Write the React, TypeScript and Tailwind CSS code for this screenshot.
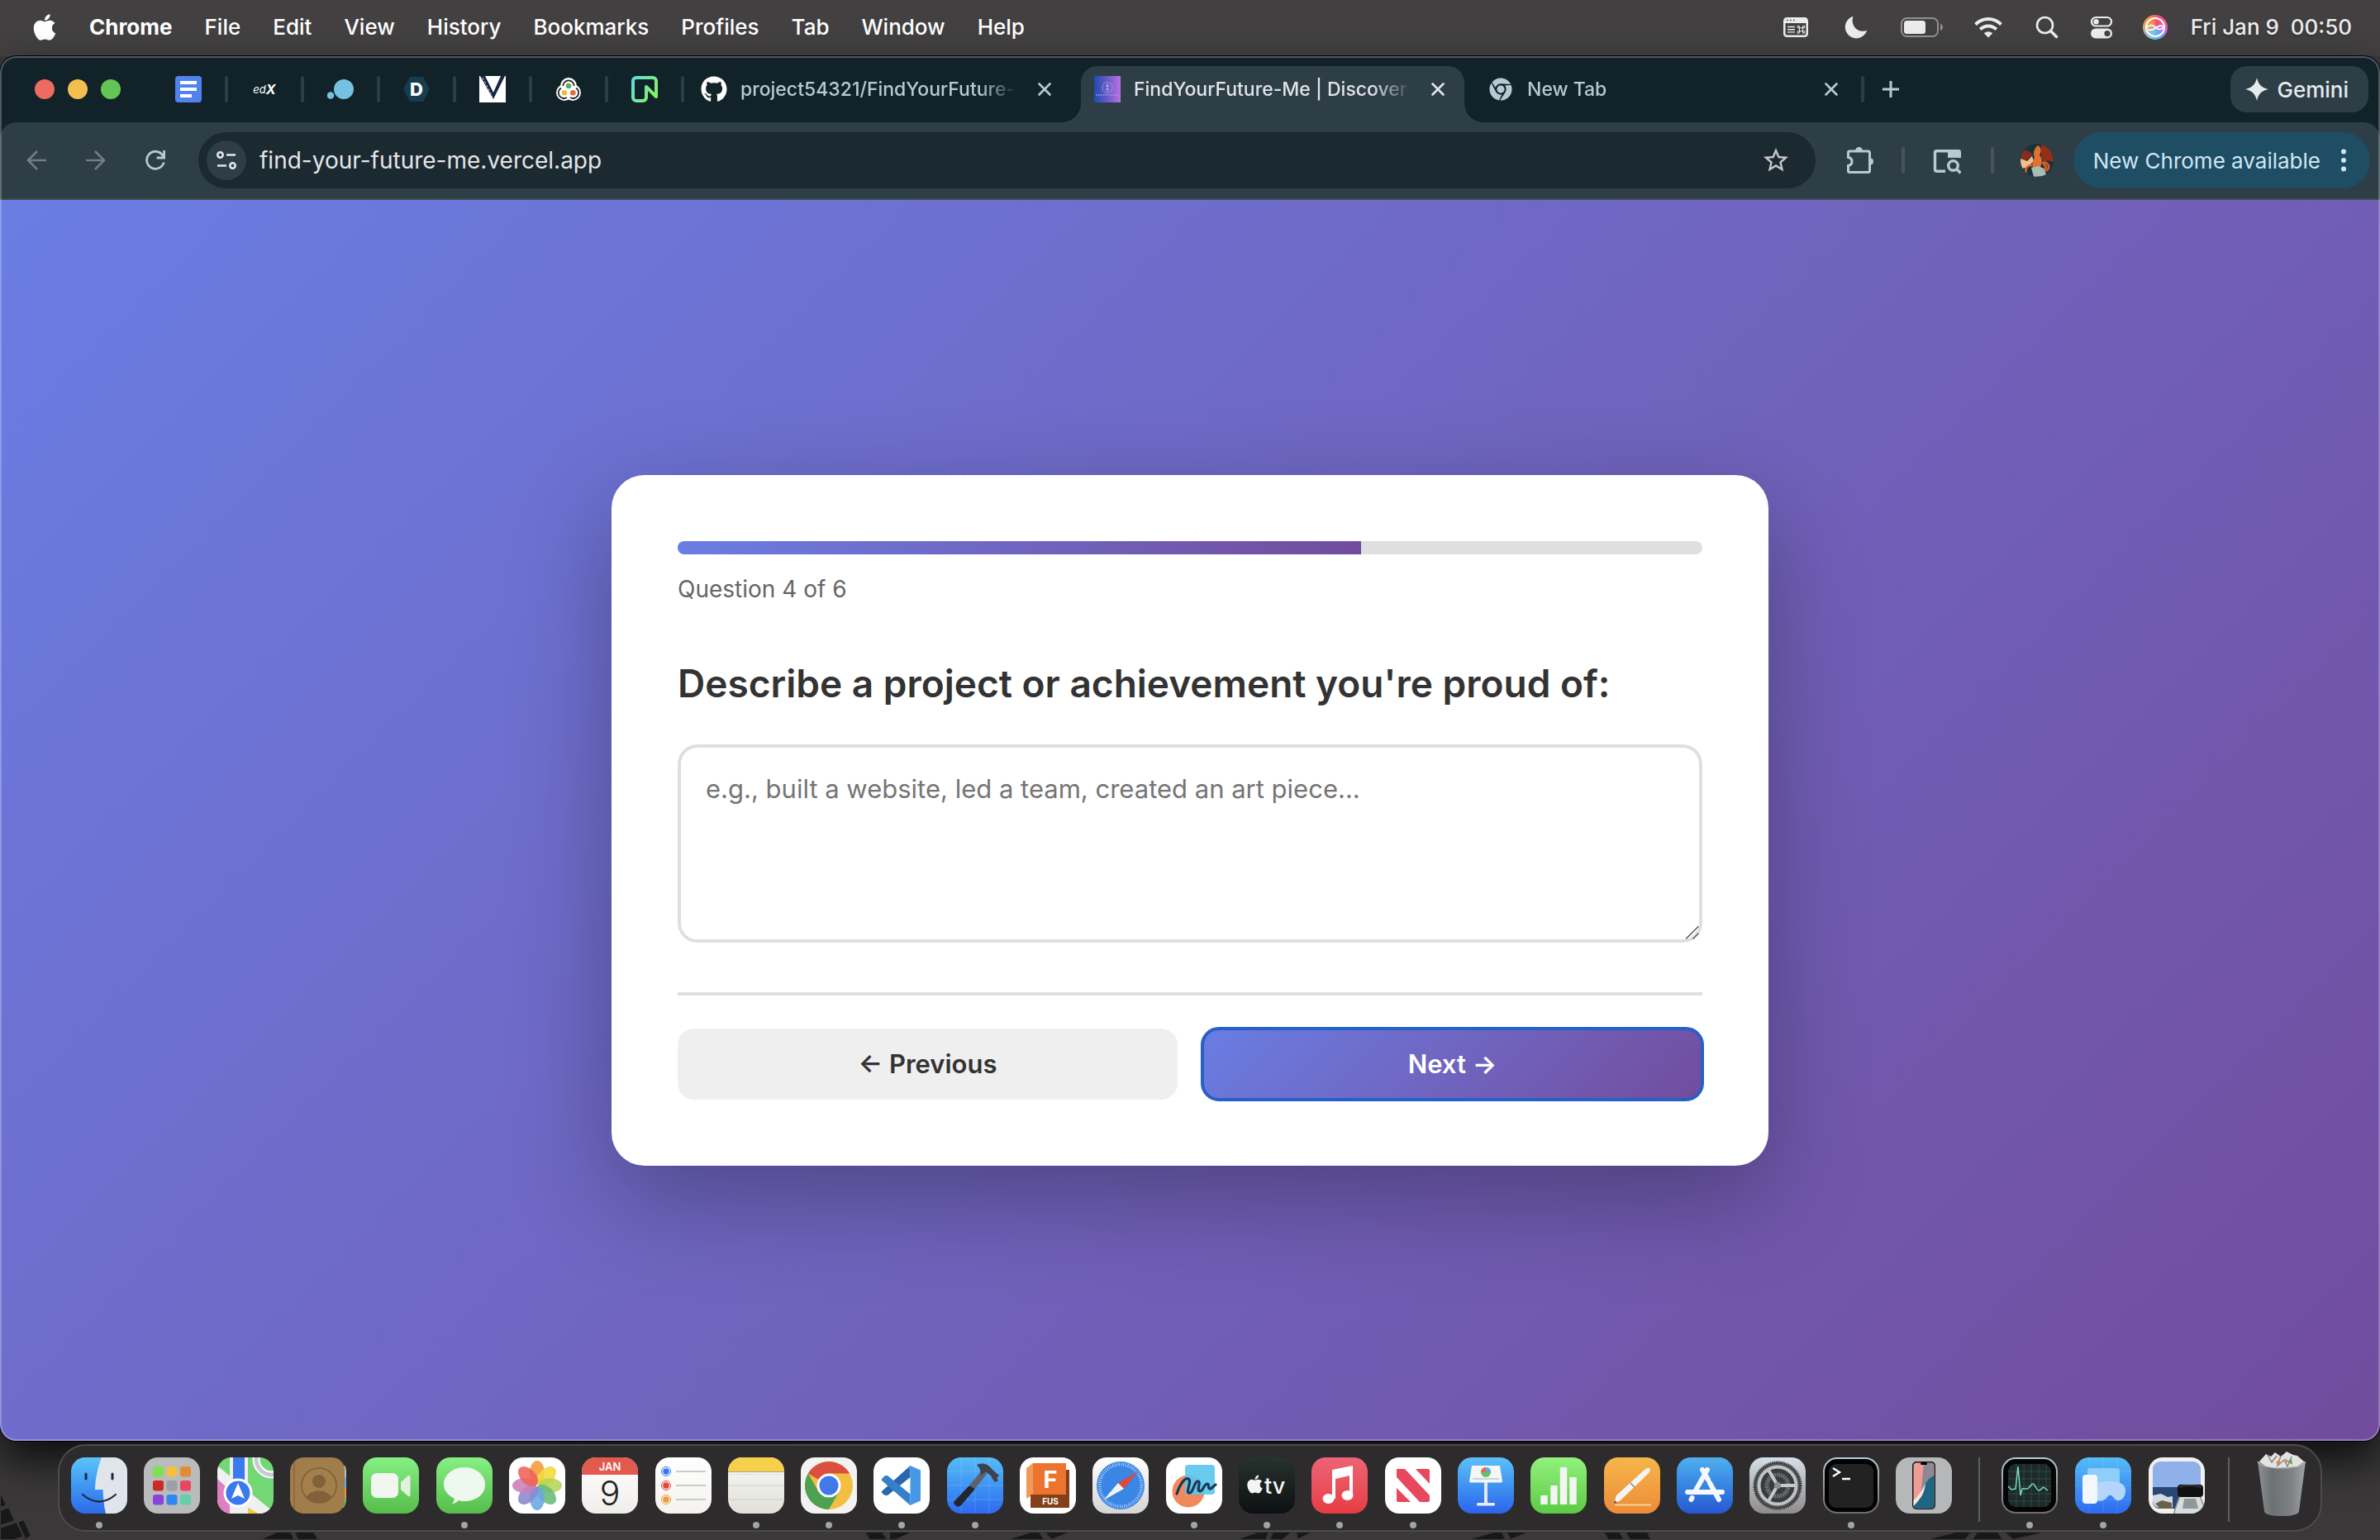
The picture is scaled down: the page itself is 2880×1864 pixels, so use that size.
import { useState } from "react";
import type { ReactNode } from "react";
import { FaApple, FaChrome, FaGithub } from "react-icons/fa";
import { MdStarBorder } from "react-icons/md";

const MENUS = ["File", "Edit", "View", "History", "Bookmarks", "Profiles", "Tab", "Window", "Help"];

function MenuBar() {
    return (
        <header className="flex h-17 shrink-0 items-center bg-[#424041] pb-0.5 pl-[40px] pr-[34px] text-[26px] leading-8 font-medium text-white text-shadow-md">
            <FaApple className="h-9 w-7 shrink-0" />
            <nav className="ml-10 flex items-center gap-[39px]">
                <button className="font-bold">Chrome</button>
                {MENUS.map((menu) => (
                    <button key={menu}>{menu}</button>
                ))}
            </nav>
            <div className="ml-auto flex items-center text-[#ececec]">
                <svg className="h-6 w-[30px]" viewBox="0 0 30 24" fill="none">
                    <rect x="1.25" y="1.25" width="27.5" height="21.5" rx="3" stroke="currentColor" strokeWidth="2.5" />
                    <path d="M1 2h28v5H1z" fill="currentColor" />
                    <path d="M4 3.5h1.6M8 3.5h1.6M12 3.5h1.6" stroke="#424041" strokeWidth="1.6" />
                    <path d="M5 11.5h9M5 14.7h9M5 17.9h9" stroke="currentColor" strokeWidth="1.4" />
                    <path d="M19.5 12.7h4v4h-4zM19.5 12.7h-1.2a1.2 1.2 0 1 1 1.2-1.2zM23.5 12.7v-1.2a1.2 1.2 0 1 1 1.2 1.2zM23.5 16.7h1.2a1.2 1.2 0 1 1-1.2 1.2zM19.5 16.7v1.2a1.2 1.2 0 1 1-1.2-1.2z" stroke="currentColor" strokeWidth="1.1" />
                </svg>
                <svg className="ml-11 h-7 w-7" viewBox="0 0 28 28" fill="currentColor">
                    <path d="M10.5.8A14 14 0 0 0 9.600 5.500C9.600 13 15 18.800 22 18.800c1.900 0 3.700-.3 5.200-1C25.200 23.500 20.200 27.400 14.200 27.400 6.800 27.400.8 21.300.8 13.800.8 7.800 4.800 2.500 10.500.8z" />
                </svg>
                <svg className="ml-10 h-6 w-[52px]" viewBox="0 0 52 24" fill="none">
                    <rect x="1" y="1" width="44" height="22" rx="6.500" stroke="#929192" strokeWidth="2" />
                    <rect x="4" y="4" width="26" height="16" rx="3.500" fill="currentColor" />
                    <path d="M48 8c4 1 4 7 0 8z" fill="#929192" />
                </svg>
                <svg className="ml-9 h-[26px] w-9" viewBox="0 0 36 26" fill="none" stroke="currentColor" strokeWidth="4">
                    <path d="M2.500 9.500C11.500.8 24.500.8 33.500 9.500" />
                    <path d="M8.200 15.500C13.500 10 22.500 10 27.800 15.500" />
                    <path d="M18 25.500l-5.200-5.300c2.700-2.700 7.700-2.700 10.400 0z" fill="currentColor" stroke="none" />
                </svg>
                <svg className="ml-[39px] h-7 w-7" viewBox="0 0 28 28" fill="none" stroke="currentColor">
                    <circle cx="11.500" cy="11.500" r="9.500" strokeWidth="2.600" />
                    <path d="M18.500 18.500l7 7" strokeWidth="3.400" strokeLinecap="round" />
                </svg>
                <svg className="ml-[38px] h-7 w-7" viewBox="0 0 28 28" fill="none">
                    <rect x="2" y="2" width="24" height="10.500" rx="5.250" stroke="currentColor" strokeWidth="2.200" />
                    <circle cx="7.500" cy="7.200" r="3.200" fill="currentColor" />
                    <rect x="1" y="15.500" width="26" height="12" rx="6" fill="currentColor" />
                    <circle cx="21" cy="21.500" r="3.600" fill="#424041" />
                </svg>
                <div className="ml-9 h-[30px] w-[30px] rounded-full bg-[conic-gradient(from_20deg,#ee4f77,#f05a9a,#c86cf0,#5fb4f4,#79c6ee,#b8b6b4,#f0a24a,#f08a4c,#ee4f77)]">
                    <svg viewBox="0 0 30 30" fill="none" stroke="white" strokeWidth="2">
                        <circle cx="15" cy="15" r="11" />
                        <path d="M4.500 16c5-6 9-3 11.500-.5s6 3.500 9.500-1.500M6 18c4 1.500 8-1 11-3s6-2.500 8-.5" strokeWidth="1.700" />
                    </svg>
                </div>
                <span className="ml-7 whitespace-pre">Fri Jan 9  00:50</span>
            </div>
        </header>
    );
}

const PINNED: { name: string; icon: ReactNode }[] = [
    {
        name: "Docs",
        icon: (
            <svg viewBox="0 0 32 32">
                <rect width="32" height="32" rx="4" fill="#5183ec" />
                <path d="M6 8h20M6 16h20M6 24h14" stroke="white" strokeWidth="4" />
            </svg>
        ),
    },
    {
        name: "edX",
        icon: (
            <span className="flex h-8 items-center justify-center text-[13px] leading-8 text-white italic">
                ed<b className="text-base leading-8">X</b>
            </span>
        ),
    },
    {
        name: "Notes",
        icon: (
            <svg viewBox="0 0 32 32" fill="#76c0e2">
                <circle cx="20" cy="16" r="12" />
                <circle cx="4" cy="23.500" r="4.300" />
            </svg>
        ),
    },
    {
        name: "DevDocs",
        icon: (
            <svg viewBox="0 0 32 32">
                <path d="M0 16L8 1h16l8 15-8 15H8z" fill="#173c50" />
                <text x="16" y="24" textAnchor="middle" fontSize="22" fontWeight="800" fill="white">D</text>
            </svg>
        ),
    },
    {
        name: "Visual",
        icon: (
            <svg viewBox="0 0 32 32">
                <path d="M0 0h32v32H0z" fill="white" />
                <path d="M1 0h6l10 20 9-20h5L17 28z" fill="#16243f" />
                <path d="M4 2l12 23" stroke="#c9cfdb" strokeWidth="1" strokeDasharray="3 2" />
            </svg>
        ),
    },
    {
        name: "Trio",
        icon: (
            <svg viewBox="0 0 32 32">
                <g fill="white">
                    <circle cx="16" cy="12" r="10" />
                    <circle cx="11" cy="20" r="10" />
                    <circle cx="21" cy="20" r="10" />
                </g>
                <g fill="none" stroke="#222" strokeWidth="1.800">
                    <path d="M9.300 12a6.700 6.700 0 1 1 13.400 0" />
                    <path d="M7 14.500a6.700 6.700 0 0 0 7 11.500" />
                    <path d="M25 14.500a6.700 6.700 0 0 1-7 11.500" />
                </g>
                <circle cx="16" cy="12" r="3.300" fill="#57b15c" />
                <circle cx="11" cy="20.200" r="3.300" fill="#f0b942" />
                <circle cx="21.300" cy="20.200" r="3.300" fill="#e2683e" />
            </svg>
        ),
    },
    {
        name: "Neon",
        icon: (
            <svg viewBox="0 0 32 32" fill="none">
                <defs>
                    <linearGradient id="neon" x1="0" y1="0" x2="1" y2="0.600">
                        <stop offset="0" stopColor="#62dcdc" />
                        <stop offset="1" stopColor="#84f06a" />
                    </linearGradient>
                </defs>
                <path d="M30 25V6a4 4 0 0 0-4-4H6a4 4 0 0 0-4 4v20a4 4 0 0 0 4 4h8a4 4 0 0 0 4-4V13z" stroke="url(#neon)" strokeWidth="4" strokeLinejoin="round" />
            </svg>
        ),
    },
];

function CloseIcon() {
    return (
        <svg className="h-4 w-4" viewBox="0 0 16 16" stroke="currentColor" strokeWidth="2.600" strokeLinecap="round">
            <path d="M1.500 1.500l13 13M14.500 1.500l-13 13" />
        </svg>
    );
}

function TabTitle({ children }: { children: ReactNode }) {
    return (
        <span className="ml-4 w-[336px] text-[23px] font-medium whitespace-nowrap [mask-image:linear-gradient(to_right,black_86%,transparent)]">
            {children}
        </span>
    );
}

function TabStrip() {
    return (
        <div className="flex h-20 items-end bg-[#122229] text-[#b9c9d4]">
            <div className="flex h-[68px] flex-1 items-start">
                <div className="flex h-14 items-center pl-[42px]">
                    <div className="flex gap-4">
                        <button aria-label="Close window" className="h-6 w-6 rounded-full bg-[#ed6b60]" />
                        <button aria-label="Minimize window" className="h-6 w-6 rounded-full bg-[#f5bf4f]" />
                        <button aria-label="Zoom window" className="h-6 w-6 rounded-full bg-[#62c554]" />
                    </div>
                    <div className="ml-[66px] flex items-center">
                        {PINNED.map((tab) => (
                            <div key={tab.name} className="flex items-center">
                                <button aria-label={tab.name} className="h-8 w-8">
                                    {tab.icon}
                                </button>
                                <span className="mx-7 h-8 w-1 rounded-sm bg-[#2d3d45]" />
                            </div>
                        ))}
                    </div>
                    <FaGithub className="-ml-2 h-8 w-8 text-white" />
                    <TabTitle>project54321/FindYourFuture-</TabTitle>
                    <button aria-label="Close tab" className="ml-6">
                        <CloseIcon />
                    </button>
                </div>

                <svg className="ml-3 h-[68px] w-6 shrink-0" viewBox="0 0 24 68">
                    <path d="M24 44v24H0c14 0 24-10 24-24z" fill="#2d3e46" />
                </svg>
                <div className="h-[68px] rounded-t-[20px] bg-[#2d3e46] px-4 text-[#e0e4e7]">
                    <div className="flex h-14 items-center">
                        <svg className="h-8 w-8" viewBox="0 0 32 32" fill="none">
                            <defs>
                                <linearGradient id="fav">
                                    <stop offset="0" stopColor="#1f4bb0" />
                                    <stop offset="0.500" stopColor="#6a5bc8" />
                                    <stop offset="1" stopColor="#bd70e2" />
                                </linearGradient>
                            </defs>
                            <path d="M0 0h32v32H0z" fill="url(#fav)" />
                            <ellipse cx="16" cy="14" rx="6" ry="6.500" stroke="#a9a4ee" strokeOpacity="0.700" strokeWidth="1" />
                            <path d="M16 9v10M14 12h4M14 16h4" stroke="#c9c4f6" strokeOpacity="0.800" strokeWidth="1" />
                            <path d="M2 23h28" stroke="#9a90e4" strokeWidth="1.500" strokeDasharray="2 1" />
                        </svg>
                        <TabTitle>FindYourFuture-Me | Discover</TabTitle>
                        <button aria-label="Close tab" className="mr-2 ml-6">
                            <CloseIcon />
                        </button>
                    </div>
                </div>
                <svg className="h-[68px] w-6 shrink-0" viewBox="0 0 24 68">
                    <path d="M0 44v24h24C10 68 0 58 0 44z" fill="#2d3e46" />
                </svg>

                <div className="ml-1 flex h-14 items-center">
                    <FaChrome className="h-8 w-8 p-0.5" />
                    <TabTitle>New Tab</TabTitle>
                    <button aria-label="Close tab" className="ml-6">
                        <CloseIcon />
                    </button>
                    <span className="ml-7 h-8 w-1 rounded-sm bg-[#2d3d45]" />
                    <button aria-label="New tab" className="ml-[22px]">
                        <svg className="h-5 w-5" viewBox="0 0 20 20" stroke="currentColor" strokeWidth="3">
                            <path d="M10 0v20M0 10h20" />
                        </svg>
                    </button>
                </div>

                <button className="mr-3.5 ml-auto flex h-14 items-center gap-2.5 rounded-[20px] bg-[#2d3e46] pr-6 pl-[18px] text-[26px] font-medium text-[#e6eaed]">
                    <svg className="h-7 w-7" viewBox="0 0 28 28" fill="currentColor">
                        <path d="M14 0c1.500 8 6 12.500 14 14-8 1.500-12.500 6-14 14C12.500 20 8 15.500 0 14 8 12.500 12.500 8 14 0z" />
                    </svg>
                    Gemini
                </button>
            </div>
        </div>
    );
}

function Toolbar() {
    return (
        <div className="bg-[#122229]">
            <div className="flex h-[92px] items-center rounded-t-[20px] bg-[#2d3e46] pr-3 pl-8 text-[#b9c9d4]">
                <button aria-label="Back" className="text-[#717e85]">
                    <svg className="h-6 w-6" viewBox="0 0 24 24" fill="none" stroke="currentColor" strokeWidth="2.600">
                        <path d="M24 12H2M13 1L2 12l11 11" />
                    </svg>
                </button>
                <button aria-label="Forward" className="ml-12 text-[#717e85]">
                    <svg className="h-6 w-6" viewBox="0 0 24 24" fill="none" stroke="currentColor" strokeWidth="2.600">
                        <path d="M0 12h22M11 1l11 11-11 11" />
                    </svg>
                </button>
                <button aria-label="Reload" className="ml-12">
                    <svg className="h-6 w-6" viewBox="0 0 24 24" fill="none" stroke="currentColor" strokeWidth="2.800">
                        <path d="M22.300 14.500A10.500 10.500 0 1 1 20 4.800L22 8.500" />
                        <path d="M22.600 0v9h-9" />
                    </svg>
                </button>
                <div className="ml-10 flex h-[68px] flex-1 items-center rounded-full bg-[#1b2931] pr-[30px] pl-2.5">
                    <button aria-label="Site information" className="flex h-12 w-12 items-center justify-center rounded-full bg-[#2d3e46] text-[#e3e6e8]">
                        <svg className="h-6 w-6" viewBox="0 0 24 24" fill="none" stroke="currentColor" strokeWidth="2.600">
                            <circle cx="4.500" cy="5.500" r="3.200" />
                            <path d="M12 5.500h11M1 18.500h11" />
                            <circle cx="19.500" cy="18.500" r="3.200" />
                        </svg>
                    </button>
                    <input
                        aria-label="Address"
                        defaultValue="find-your-future-me.vercel.app"
                        className="ml-4 h-10 flex-1 bg-transparent text-[28px] leading-10 text-[#e3e6e8] outline-none"
                    />
                    <button aria-label="Bookmark this tab" className="text-[#c7c9cc]">
                        <MdStarBorder className="h-9 w-9" />
                    </button>
                </div>
                <button aria-label="Extensions" className="ml-9">
                    <svg className="h-9 w-9" viewBox="0 0 36 36" fill="none">
                        <path d="M5 7h23a1.500 1.500 0 0 1 1.500 1.500V31a1.500 1.500 0 0 1-1.500 1.500H5A1.500 1.500 0 0 1 3.500 31v-6.500c6-1 6-9 0-10V8.500A1.500 1.500 0 0 1 5 7z" stroke="currentColor" strokeWidth="3" />
                        <path d="M12 6.500a4.500 4.500 0 0 1 9 0zM30 15.500a4 4 0 0 1 0 8z" fill="currentColor" />
                    </svg>
                </button>
                <span className="ml-8 h-8 w-1 rounded-sm bg-[#46545e]" />
                <button aria-label="Search tabs" className="ml-8">
                    <svg className="h-9 w-9" viewBox="0 0 36 36" fill="none" stroke="currentColor" strokeWidth="3.400">
                        <path d="M17 31.300H6.500a2 2 0 0 1-2-2V8.700a2 2 0 0 1 2-2H33" />
                        <path d="M20 5h13a3 3 0 0 1 3 3v7H20z" fill="currentColor" stroke="none" />
                        <circle cx="26.500" cy="24.500" r="5.800" />
                        <path d="M30.500 28.500l5 5" />
                    </svg>
                </button>
                <span className="ml-9 h-8 w-1 rounded-sm bg-[#46545e]" />
                <button aria-label="Profile" className="ml-8 h-10 w-10 overflow-hidden rounded-full">
                    <svg viewBox="0 0 40 40">
                        <path d="M0 0h40v40H0z" fill="#1b3238" />
                        <path d="M25 1c8 2 15 9 15 21l-7-2-4 4-4-8z" fill="#94301a" />
                        <path d="M2 8c6-1 10 2 13 6L4 22H0z" fill="#8a2c1c" />
                        <path d="M0 18l8 3 6-6 2 6-8 8-8 1z" fill="#eebf94" />
                        <path d="M21 2c5 3 4 8 2 12 4 4 3 10 1 14l-9 2c-1-5-1-9 2-13-2-5-1-11 4-15z" fill="#e2702e" />
                        <path d="M27 23c6-1 9 4 6 8-2 3-5 1-4-1 2 0 3-3 0-4zM14 26c-6 0-9 5-7 9" fill="none" stroke="#dc5f27" strokeWidth="2.500" />
                        <path d="M13 29l9-2 6 3 4 9-16 1z" fill="#a7bdb2" />
                    </svg>
                </button>
                <button className="ml-6 flex h-[68px] items-center rounded-full bg-[#1f4d64] pr-7 pl-6 text-[26px] text-[#cfe6f5]">
                    New Chrome available
                    <svg className="ml-6 h-7 w-2" viewBox="0 0 8 28" fill="currentColor">
                        <circle cx="4" cy="3.500" r="3" />
                        <circle cx="4" cy="14" r="3" />
                        <circle cx="4" cy="24.500" r="3" />
                    </svg>
                </button>
            </div>
            <div className="h-0.5 bg-[#414a50]" />
        </div>
    );
}

function QuestionCard() {
    const [answer, setAnswer] = useState("");
    const step = 4;
    const total = 6;

    return (
        <div className="w-full max-w-[1400px] rounded-[40px] bg-white p-20 shadow-[0_40px_120px_rgba(0,0,0,0.3)]">
            <div className="h-4 overflow-hidden rounded-full bg-[#dfdfdf]">
                <div className="h-full bg-linear-to-r from-[#697de3] to-[#714c9d]" style={{ width: `${(step / total) * 100}%` }} />
            </div>
            <p className="mt-6 text-[28px] leading-9 text-[#666]">
                Question {step} of {total}
            </p>
            <label htmlFor="answer" className="mt-16 block text-[46px] leading-16 font-semibold text-[#333]">
                Describe a project or achievement you're proud of:
            </label>
            <div className="relative mt-[42px]">
                <textarea
                    id="answer"
                    value={answer}
                    onChange={(e) => setAnswer(e.target.value)}
                    placeholder="e.g., built a website, led a team, created an art piece..."
                    className="block h-60 w-full resize-none rounded-3xl border-4 border-[#dfdfdf] p-[30px] text-[31px] leading-10 text-[#333] outline-none placeholder:text-[#757575]"
                />
                <svg className="absolute right-1 bottom-1 h-4 w-4" viewBox="0 0 16 16" stroke="#555" strokeWidth="1.400">
                    <path d="M0 15.500L15.500 0M8.500 15.500l7-7" />
                </svg>
            </div>
            <div className="mt-15 flex gap-[30px] border-t-4 border-[#dfdfdf] pt-10 text-[31px] leading-[38px] font-semibold">
                <button className="flex-1 rounded-[20px] bg-[#efefef] py-6 text-[#333]">← Previous</button>
                <button className="flex-1 rounded-[20px] bg-linear-135 from-[#697de3] to-[#714c9d] py-6 text-white outline-4 -outline-offset-2 outline-[#2660c8]">
                    Next →
                </button>
            </div>
        </div>
    );
}

interface DockApp {
    name: string;
    tile: string;
    running?: boolean;
    art: ReactNode;
}

const PETALS = ["#f29a38", "#f3da3c", "#b4d555", "#68bb7c", "#68a6e2", "#8c86cf", "#c980b4", "#ee6258"];
const PADS = ["#7be34f", "#f5c03c", "#e58b34", "#cb2b22", "#9ba1a4", "#eb4560", "#8b44d8", "#2f87ee", "#66cfaa"];

const APPS: DockApp[] = [
    {
        name: "Finder",
        tile: "bg-linear-to-b from-[#5bc4f8] to-[#2f68ea]",
        running: true,
        art: (
            <>
                <path d="M37 0C32 12 29 28 29 39h9.500C39 50 40 60 42 68h26V0z" fill="#dfe5eb" />
                <path d="M18 20v6M50 20v6" stroke="#1d2a3c" strokeWidth="3" strokeLinecap="round" />
                <path d="M14 45q20 17 40 0" fill="none" stroke="#1d2a3c" strokeWidth="2.200" strokeLinecap="round" />
            </>
        ),
    },
    {
        name: "Launchpad",
        tile: "bg-[#babbbc]",
        art: PADS.map((color, i) => (
            <rect key={color} x={11 + (i % 3) * 16.5} y={11 + Math.floor(i / 3) * 17} width="13" height="12.500" rx="3" fill={color} />
        )),
    },
    {
        name: "Maps",
        tile: "bg-[#74d775]",
        art: (
            <>
                <path d="M0 10l68 56v2H0z" fill="#eef0f2" />
                <path d="M0 26l24 22v20H0z" fill="#dd7fc2" />
                <path d="M36 60l14 8H33z" fill="#f3c940" />
                <path d="M15 0h22v68H15z" fill="#eef0f2" />
                <path d="M19 0h14v42H19z" fill="#3a79f0" />
                <circle cx="66" cy="2" r="19" fill="none" stroke="white" strokeWidth="9" />
                <circle cx="66" cy="2" r="19" fill="none" stroke="#c7ccd4" strokeWidth="5" />
                <circle cx="25" cy="43" r="16" fill="#3a79f0" stroke="white" strokeWidth="3" />
                <path d="M25 31l8 19-8-4-8 4z" fill="white" />
            </>
        ),
    },
    {
        name: "Contacts",
        tile: "bg-transparent",
        art: (
            <>
                <path d="M58 10h9q3 6 3 14H58z" fill="#b9bcc0" />
                <path d="M58 24h12v13H58z" fill="#58b3ea" />
                <path d="M58 37h12v12H58z" fill="#ef9138" />
                <path d="M58 49h12q0 8-4 12h-8z" fill="#5dc858" />
                <rect width="66" height="68" rx="15" fill="#a17d4b" />
                <path d="M5 5v58" stroke="#8a6839" strokeWidth="1.500" />
                <circle cx="35" cy="34" r="21" fill="#a57f4b" stroke="#7f5f36" strokeWidth="1.600" />
                <circle cx="35" cy="29" r="8" fill="#80613a" />
                <path d="M20 48c5-10 25-10 30 0-7 9-23 9-30 0z" fill="#80613a" />
            </>
        ),
    },
    {
        name: "FaceTime",
        tile: "bg-linear-to-b from-[#86f083] to-[#56bd4b]",
        art: (
            <>
                <rect x="10" y="19" width="33" height="30" rx="7" fill="#f1f7f0" />
                <path d="M46 30l9-8q2.500-1 2.500 2v21q0 3-2.500 2l-9-8z" fill="#e3f1e1" />
            </>
        ),
    },
    {
        name: "Messages",
        tile: "bg-linear-to-b from-[#86f083] to-[#56bd4b]",
        running: true,
        art: (
            <path d="M34 12c14 0 25 9 25 21S48 53 34 53c-3 0-5-.3-7-1-2 2-5 4-8 4 2-2 3-4 2.500-6.500C14 46 9 40 9 33c0-12 11-21 25-21z" fill="#eff8ee" />
        ),
    },
    {
        name: "Photos",
        tile: "bg-white",
        art: PETALS.map((color, i) => (
            <ellipse key={color} cx="34" cy="18.500" rx="9" ry="14.500" fill={color} opacity="0.880" transform={`rotate(${i * 45} 34 34)`} />
        )),
    },
    {
        name: "Calendar",
        tile: "bg-linear-to-b from-white to-[#efeeeb]",
        art: (
            <>
                <path d="M0 0h68v21H0z" fill="#e3594e" />
                <text x="34" y="16" textAnchor="middle" fontSize="13" fontWeight="600" fill="white">JAN</text>
                <text x="34" y="58" textAnchor="middle" fontSize="41" fontWeight="300" fill="#222">9</text>
            </>
        ),
    },
    {
        name: "Reminders",
        tile: "bg-linear-to-b from-white to-[#f3f2ef]",
        art: (
            <>
                {["#3478f6", "#e5453a", "#ee9a36"].map((color, i) => (
                    <g key={color}>
                        <circle cx="13" cy={17 + i * 17} r="3.800" fill={color} />
                        <circle cx="13" cy={17 + i * 17} r="5.500" fill="none" stroke={color} />
                        <path d={`M25 ${17 + i * 17}h36`} stroke="#bdbdbd" strokeWidth="1.500" />
                    </g>
                ))}
            </>
        ),
    },
    {
        name: "Notes",
        tile: "bg-linear-to-b from-[#fafaf8] to-[#e0dfd8]",
        running: true,
        art: (
            <>
                <path d="M0 0h68v17H0z" fill="#f6cf4b" />
                <path d="M0 17.500h68" stroke="#a9a48f" />
                <path d="M1 20.500h66" stroke="#bcbbb5" strokeDasharray="1 2" />
                <path d="M0 34h68M0 51h68" stroke="#cfcec9" />
            </>
        ),
    },
    {
        name: "Google Chrome",
        tile: "bg-[#f1f2f1]",
        running: true,
        art: (
            <>
                <circle cx="34" cy="34" r="29" fill="#f2bf42" />
                <path d="M34 34L8.900 19.500A29 29 0 0 1 59.100 19.500H34z" fill="#da4f3f" />
                <path d="M34 63A29 29 0 0 1 8.900 19.500L21.400 41.200 34 34l12.500 7.300z" fill="#4da151" />
                <circle cx="34" cy="34" r="14.500" fill="white" />
                <circle cx="34" cy="34" r="11.500" fill="#4179e6" />
            </>
        ),
    },
    {
        name: "Visual Studio Code",
        tile: "bg-white",
        running: true,
        art: (
            <>
                <path d="M44.500 10v14L17 46h-3l-4-3v-2z" fill="#2a67ac" />
                <path d="M10 26l4-4h3l27.500 22.500V58L10 28z" fill="#3480cb" />
                <path d="M44.500 10L57 15.500v37L44.500 58l-3-3 3-1.500v-39l-3-1.500z" fill="#4698e6" />
            </>
        ),
    },
    {
        name: "Xcode",
        tile: "bg-linear-to-b from-[#57bcf7] to-[#2f69ef]",
        running: true,
        art: (
            <>
                <path d="M0 17h68M0 34h68M0 51h68M17 0v68M34 0v68M51 0v68" stroke="white" strokeOpacity="0.140" />
                <path d="M8 54L27 34l7 4-17 20q-4 3-7 0-2-2-2-4z" fill="#25262d" />
                <path d="M27 34l15-18 6 4-14 18z" fill="#5f616a" />
                <path d="M36 9c7-3 14-1 18 5l9 8-3 3 2 3-4 2-3-4-2-4-6-4-7 3c1-4 0-8-4-12z" fill="#3f414a" />
            </>
        ),
    },
    {
        name: "Fusion",
        tile: "bg-white",
        art: (
            <>
                <path d="M16 7h40v38H16z" fill="#ec742f" />
                <path d="M16 7v38l-8 5V13z" fill="#f09a5a" />
                <path d="M13 45h43V15h4v46H13z" fill="#84401a" />
                <text x="37" y="37" textAnchor="middle" fontSize="29" fontWeight="700" fill="white">F</text>
                <text x="37" y="57" textAnchor="middle" fontSize="10" fontWeight="700" fill="white">FUS</text>
            </>
        ),
    },
    {
        name: "Safari",
        tile: "bg-linear-to-b from-white to-[#d5d5d6]",
        art: (
            <>
                <circle cx="34" cy="34" r="29" fill="#3a86e4" />
                <circle cx="34" cy="34" r="25.500" fill="none" stroke="#cfe4fa" strokeWidth="4" strokeDasharray="0.800 1.870" />
                <path d="M55 17L38 38l-7-7z" fill="#e4463c" />
                <path d="M13 52l18-21 7 7z" fill="#f2f2f2" />
            </>
        ),
    },
    {
        name: "Freeform",
        tile: "bg-white",
        running: true,
        art: (
            <>
                <circle cx="27" cy="41" r="19.500" fill="#f08a5e" />
                <rect x="23" y="9" width="36" height="36" rx="4" fill="#5cc8ee" opacity="0.920" />
                <path d="M13 44c4-12 10-20 14-18 5 2-4 17 1 17 5 1 6-15 11-14 4 1-3 11 2 12 4 0 5-9 9-9 3 1 0 7 4 6l6-5" fill="none" stroke="#173a5a" strokeWidth="3.200" strokeLinecap="round" />
            </>
        ),
    },
    {
        name: "TV",
        tile: "bg-linear-to-b from-[#27332f] to-[#0d1012]",
        running: true,
        art: (
            <>
                <FaApple x="7" y="20" size={25} color="#f4f4f4" />
                <text x="31" y="44" fontSize="27" fontWeight="500" fill="#f4f4f4">tv</text>
            </>
        ),
    },
    {
        name: "Music",
        tile: "bg-linear-to-b from-[#ec6476] to-[#e63b43]",
        running: true,
        art: (
            <>
                <path d="M25 16l25-5v37h-4V22l-17 4v24h-4z" fill="white" />
                <path d="M25 15l25-5v11l-25 5z" fill="white" />
                <ellipse cx="20.500" cy="50" rx="7" ry="6" fill="white" />
                <ellipse cx="43.500" cy="46" rx="7" ry="6" fill="white" />
            </>
        ),
    },
    {
        name: "News",
        tile: "bg-white",
        running: true,
        art: (
            <>
                <path d="M14 14h10l30 32v6q0 2-2 2H42L14 24z" fill="#e8485c" />
                <path d="M14 37l17 17H16q-2 0-2-2z" fill="#e8485c" />
                <path d="M37 14h15q2 0 2 2v16z" fill="#e8485c" />
            </>
        ),
    },
    {
        name: "Keynote",
        tile: "bg-linear-to-b from-[#5cc0f8] to-[#2f62ea]",
        art: (
            <>
                <path d="M32 28h4v28h-4z" fill="#e2e8ee" />
                <rect x="23" y="55" width="22" height="3.500" rx="1.500" fill="#e8ecf0" />
                <path d="M17 10h34l3 19q0 1.500-2 1.500H16q-2 0-2-1.500z" fill="#f4f6f8" />
                <path d="M18 26h32" stroke="#9fb0c2" />
                <circle cx="34" cy="18" r="6" fill="#62c462" />
                <path d="M34 18V12a6 6 0 0 1 6 6z" fill="#58a9e8" />
                <path d="M34 18v-6a6 6 0 0 0-6 6z" fill="#ea6a3c" />
            </>
        ),
    },
    {
        name: "Numbers",
        tile: "bg-linear-to-b from-[#92f17c] to-[#5ccb43]",
        art: <path d="M16.500 57V46M28.500 57V34M40 57V12M51.500 57V24" stroke="#f2f5f2" strokeWidth="8.500" />,
    },
    {
        name: "Pages",
        tile: "bg-linear-to-b from-[#f5b64a] to-[#ec8c38]",
        art: (
            <>
                <path d="M13 57.500h44" stroke="#f8cf97" strokeWidth="2" />
                <path d="M12 56l3-10 34-31q4-3 6-2 2 2-1 6L20 52z" fill="#f4f4f4" />
                <path d="M32 31l5 5" stroke="#888" strokeWidth="1.500" />
                <path d="M12 56l1-4 3 3z" fill="#555" />
            </>
        ),
    },
    {
        name: "App Store",
        tile: "bg-linear-to-b from-[#4fb0ee] to-[#2857d2]",
        art: (
            <g stroke="#f5f8fc" strokeWidth="6" strokeLinecap="round">
                <path d="M37 15L24 38M31 15l7 12M40 31l11 20M13 42h20M43 42h12M18.500 49l-1 2" />
                <path d="M24 38l-2 4h20" />
            </g>
        ),
    },
    {
        name: "System Settings",
        tile: "bg-linear-to-b from-[#d6e0e8] to-[#8f8d8b]",
        art: (
            <>
                <circle cx="34" cy="34" r="28" fill="#55565a" stroke="#2c2c2e" strokeWidth="3" strokeDasharray="1.500 1" />
                <circle cx="34" cy="34" r="22.500" fill="#3a3b3d" stroke="#c0c3c6" strokeWidth="4" />
                <circle cx="34" cy="34" r="13" fill="none" stroke="#77797c" strokeWidth="5" strokeDasharray="1.500 1" />
                <path d="M34 34h21M34 34L23.500 16M34 34L23.500 52" stroke="#c6c9cb" strokeWidth="4" />
                <circle cx="34" cy="34" r="4" fill="#8a8c8f" />
            </>
        ),
    },
    {
        name: "Terminal",
        tile: "bg-linear-to-b from-[#b9ced8] to-[#6d6b6a]",
        running: true,
        art: (
            <>
                <rect x="2" y="2" width="64" height="64" rx="15" fill="#020202" />
                <rect x="7" y="8" width="54" height="53" rx="9" fill="#222" />
                <path d="M12 13l8 5-8 5M23 26h10" fill="none" stroke="white" strokeWidth="2.400" />
            </>
        ),
    },
    {
        name: "iPhone Mirroring",
        tile: "bg-[#b6b7b8]",
        art: (
            <>
                <rect x="20" y="5" width="28" height="58" rx="5" fill="#16181c" />
                <rect x="21.500" y="6.500" width="25" height="55" rx="4" fill="#ee9c94" />
                <path d="M34 7h9q3.500 0 3.500 4v12C38 28 34 38 30 48z" fill="#8d8892" />
                <path d="M46.500 22C32 28 34 46 21.500 54v3q0 4.500 4 4.500h17q4 0 4-4z" fill="#1e6684" />
                <path d="M21.500 52C31 44 34 34 36 32c-2 12-4 16-14.500 27z" fill="#f6e6e0" />
                <rect x="30" y="6" width="8" height="3" rx="1.500" fill="black" />
            </>
        ),
    },
];

const EXTRAS: DockApp[] = [
    {
        name: "Activity Monitor",
        tile: "bg-linear-to-b from-[#b9ced8] to-[#6d6b6a]",
        running: true,
        art: (
            <>
                <rect x="2" y="2" width="64" height="64" rx="15" fill="#050505" />
                <rect x="8" y="8" width="52" height="52" rx="9" fill="#1c2a28" />
                <path d="M18 8v52M27 8v52M36 8v52M45 8v52M54 8v52M8 17h52M8 26h52M8 35h52M8 44h52M8 53h52" stroke="#35504b" strokeWidth="0.800" />
                <path d="M8 35l4 4 5-1 3-27 3 35 2-8h6c3 0 4-6 7-6s4 9 8 8c3-2 4-5 6-3l4 3" fill="none" stroke="#76d9bb" strokeWidth="1.500" />
            </>
        ),
    },
    {
        name: "Simulator",
        tile: "bg-linear-to-b from-[#57bcf7] to-[#2f69ef]",
        running: true,
        art: (
            <>
                <path d="M17 0v68M34 0v68M51 0v68M0 17h68M0 34h68M0 51h68" stroke="white" strokeOpacity="0.120" />
                <rect x="15" y="13" width="39" height="26" rx="3" fill="#8dcff8" />
                <path d="M25 31c14-3 36-4 36 9 0 12-10 16-15 8-2-3-5-3-7 0-3 4-8 6-14 4z" fill="#b4d6fa" />
                <rect x="9" y="21" width="18" height="35" rx="4" fill="#f2f7fd" />
            </>
        ),
    },
    {
        name: "Preview",
        tile: "bg-[#f2f1f0]",
        art: (
            <>
                <rect x="5" y="5" width="58" height="57" rx="9" fill="#8fb0e8" />
                <path d="M5 36h58v17q0 9-9 9H14q-9 0-9-9z" fill="#2a4672" />
                <path d="M5 46l10-2 8 4 6-1v14H14q-9 0-9-9z" fill="#d3dbe2" />
                <path d="M8 56l8-4 12 3v7H14z" fill="#6a614c" />
                <path d="M38 46h24l7 20q0 4-4 4H36q-5 0-5-4z" fill="#d9dcdd" stroke="#8b8f90" strokeWidth="1.500" />
                <path d="M43 50h14l3 12H41z" fill="#8f979b" />
                <rect x="35" y="33" width="31" height="15" rx="4" fill="#111" />
                <path d="M37 36q13-4 27 0" stroke="#555" fill="none" />
            </>
        ),
    },
];

function DockIcon({ app }: { app: DockApp }) {
    return (
        <button aria-label={app.name} className="flex shrink-0 flex-col items-center">
            <span className={`h-[68px] w-[68px] rounded-[17px] ${app.tile}`}>
                <svg className="h-[68px] w-[68px] overflow-hidden rounded-[17px]" viewBox="0 0 68 68">
                    {app.art}
                </svg>
            </span>
            <span className={`mt-2.5 h-2 w-2 rounded-full ${app.running ? "bg-[#a5a4a5]" : "bg-transparent"}`} />
        </button>
    );
}

function Dock() {
    return (
        <div className="relative mx-[70px] mt-1 mb-2.5 flex h-[106px] shrink-0 items-start rounded-[34px] border-2 border-[#4c4b4c] bg-[#2d2b2c] pt-3.5 pr-4 pl-3.5">
            <div className="flex flex-1 justify-between">
                {APPS.map((app) => (
                    <DockIcon key={app.name} app={app} />
                ))}
            </div>
            <span className="mr-[26px] ml-8 h-[78px] w-0.5 bg-[#5f5e5f]" />
            <div className="flex gap-[21px]">
                {EXTRAS.map((app) => (
                    <DockIcon key={app.name} app={app} />
                ))}
            </div>
            <span className="mr-8 ml-7 h-[78px] w-0.5 bg-[#5f5e5f]" />
            <button aria-label="Trash" className="-mt-2">
                <svg className="h-20 w-[62px]" viewBox="0 0 62 80">
                    <defs>
                        <linearGradient id="bin" x1="0" x2="1" y1="0" y2="0">
                            <stop offset="0" stopColor="#8c9092" />
                            <stop offset="0.300" stopColor="#6d7173" />
                            <stop offset="0.700" stopColor="#7d8183" />
                            <stop offset="1" stopColor="#a0a4a6" />
                        </linearGradient>
                    </defs>
                    <path d="M2 13h58l-8 60q-1 6-21 6t-21-6z" fill="url(#bin)" />
                    <path d="M4 13l8-9 6 3 5-5 7 5 7-6 8 4 5 1 8 7-8 6-12 1-14 1-12-2z" fill="#e3e3e1" />
                    <path d="M14 5l5 9 6-8M30 6l-4 12 8-7 4 8 5-12" fill="none" stroke="#7c7c7c" strokeWidth="1.300" />
                    <path d="M24 14l5-4-1 8zM35 9l4 3-2 3z" fill="#e0803c" />
                    <path d="M38 13l5-3 1 7z" fill="#5aa05c" />
                    <path d="M2 13c4 6 14 8 29 8s25-2 29-8" fill="none" stroke="#b5b8b9" strokeWidth="1.200" />
                </svg>
            </button>
        </div>
    );
}

// Dark paving-stone shapes of the wallpaper that show under the dock
function Wallpaper() {
    return (
        <svg className="absolute bottom-0 left-0 h-16 w-full" viewBox="0 0 2880 64" preserveAspectRatio="xMinYMax slice">
            <g fill="#191819" stroke="#3a3839" strokeWidth="2">
                <path d="M0 4l8 18-8 3zM0 28l11-4 7 17-18 6zM0 49l20-7 9 18-12 4H0zM21 42l8-3 9 20-8 5z" />
                <path d="M314 64l20-10h18l5 10zM356 54h24l6 10h-26z" />
                <path d="M1046 54h22l6 10h-22zM1076 54h30l-22 10h-8zM1216 64l32-10h10l6 10zM1264 54h34l-26 10z" />
                <path d="M1494 64l28-10h14l-4 10zM1540 54h24l-12 10h-16zM1568 54h22l-20 10z" />
                <path d="M1774 64l34-10h10l4 10zM1822 54h30l-24 10zM1940 54h20l6 10h-20zM1966 54h28l4 10h-26z" />
                <path d="M2328 64l38-10h20l-8 10zM2392 54h26l6 10h-38zM2424 54h56l-44 10z" />
            </g>
        </svg>
    );
}

export default function App() {
    return (
        <div className="relative flex min-h-screen flex-col overflow-hidden bg-[#3a3839] font-[Inter,'Liberation_Sans',sans-serif]">
            <Wallpaper />
            <MenuBar />
            <main className="relative flex flex-1 flex-col overflow-hidden rounded-[20px] shadow-[0_0_0_1px_black,0_24px_50px_rgba(0,0,0,0.75)]">
                <TabStrip />
                <Toolbar />
                <section className="flex flex-1 items-center justify-center bg-linear-135 from-[#697de3] to-[#714c9d] px-10 py-16">
                    <QuestionCard />
                </section>
                <div className="pointer-events-none absolute inset-0 rounded-[20px] border-2 border-white/25" />
            </main>
            <Dock />
        </div>
    );
}
